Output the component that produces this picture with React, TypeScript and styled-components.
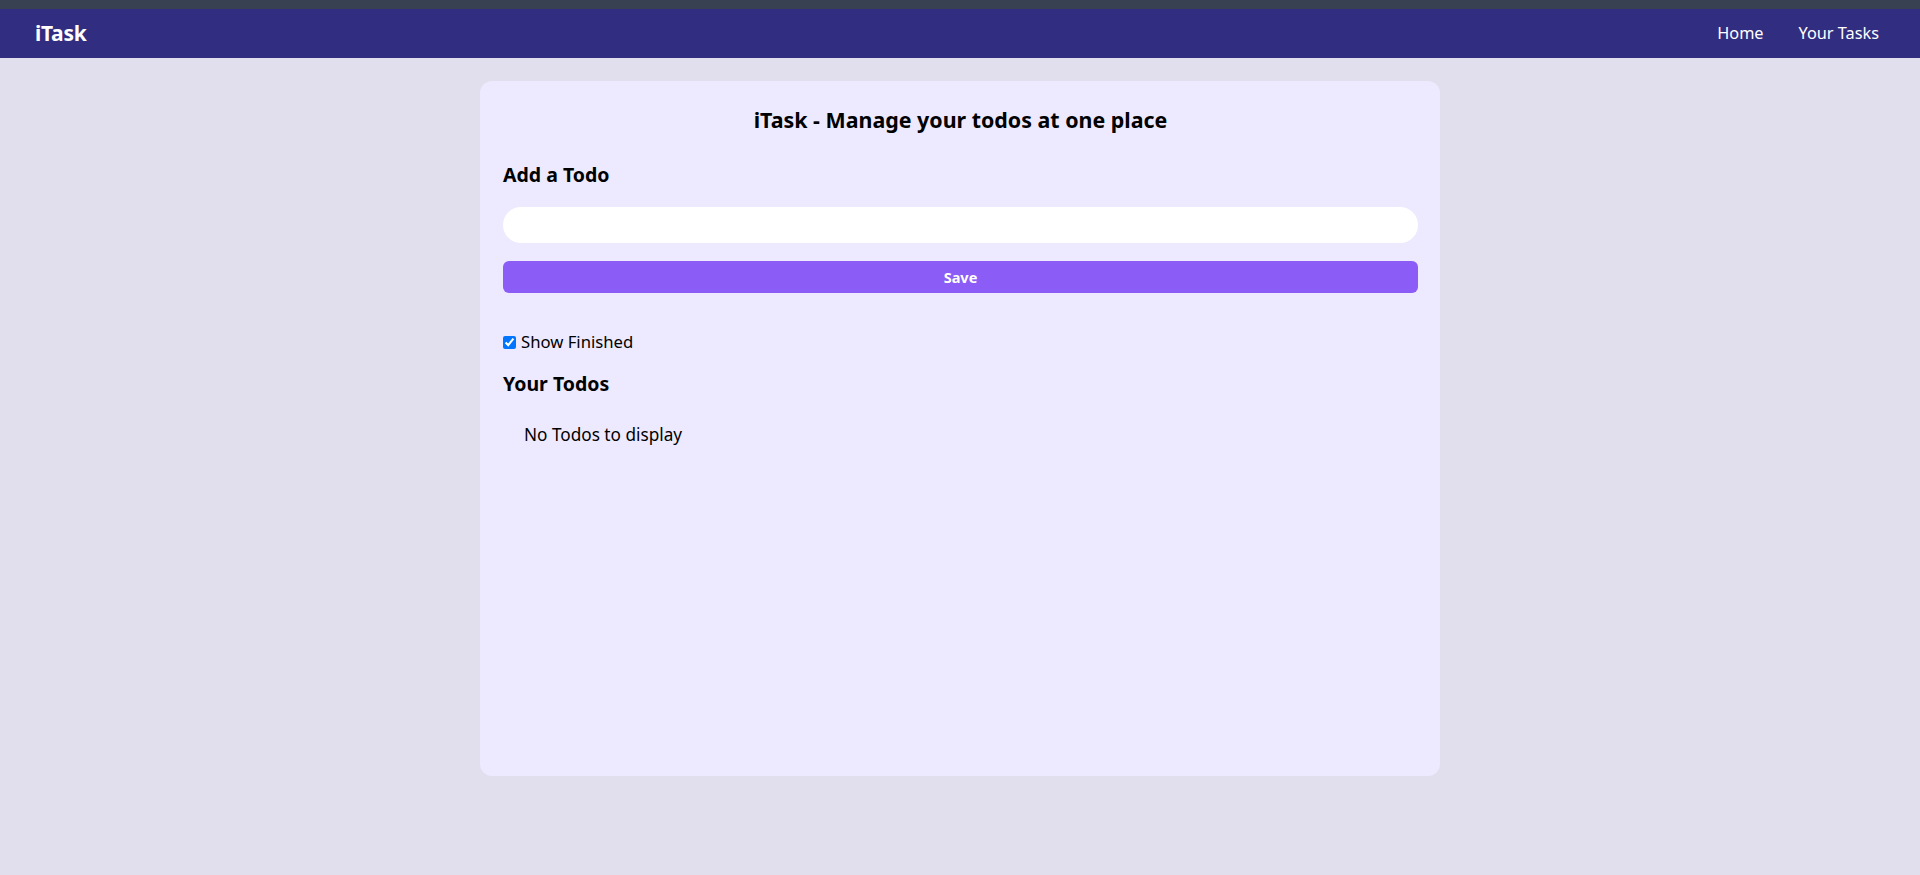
import React, { useState } from "react";
import styled, { createGlobalStyle } from "styled-components";

const GlobalStyle = createGlobalStyle`
  html, body { margin: 0; padding: 0; }
  body {
    background: #e1dfed;
    font-family: "Noto Sans", "Open Sans", sans-serif;
    color: #000;
  }
  * { box-sizing: border-box; }
`;

const Page = styled.div`
  min-height: 875px;
  display: flex;
  flex-direction: column;
`;

const TopStrip = styled.div`
  height: 9px;
  background: #374151;
`;

const Nav = styled.nav`
  height: 49px;
  background: #312e81;
  color: #fff;
  display: flex;
  align-items: center;
  justify-content: space-between;
  padding: 0 41px 1px 35px;
`;

const Logo = styled.span`
  font-weight: 700;
  font-size: 21px;
  letter-spacing: -0.3px;
`;

const NavList = styled.ul`
  list-style: none;
  margin: 0;
  padding: 0;
  display: flex;
  gap: 35px;
  font-size: 16.3px;
`;

const NavItem = styled.li`
  cursor: pointer;
`;

const Card = styled.main`
  width: 960px;
  height: 695px;
  margin: 23px auto 0;
  background: #ede9fe;
  border-radius: 12px;
  padding: 22px 22px 22px 23px;
  display: flex;
  flex-direction: column;
`;

const Title = styled.h1`
  margin: 3px 0 0;
  text-align: center;
  font-size: 21.4px;
  font-weight: 700;
  line-height: 28px;
`;

const SubHeading = styled.h2<{ $top: number }>`
  margin: ${(p) => p.$top}px 0 0;
  font-size: 19.5px;
  font-weight: 700;
  line-height: 28px;
`;

const TodoInput = styled.input`
  margin-top: 18px;
  width: 100%;
  height: 36px;
  border: none;
  border-radius: 999px;
  background: #fff;
  padding: 0 16px;
  outline: none;
  font: inherit;
`;

const SaveButton = styled.button`
  margin-top: 18px;
  width: 100%;
  height: 32px;
  border: none;
  border-radius: 6px;
  background: #8b5cf6;
  color: #fff;
  font-family: inherit;
  font-size: 14.5px;
  font-weight: 700;
  cursor: pointer;
`;

const CheckRow = styled.label`
  margin-top: 37px;
  display: flex;
  align-items: center;
  gap: 5px;
  font-size: 16.7px;
  line-height: 24px;
`;

const Check = styled.input`
  margin: 0;
  width: 13px;
  height: 13px;
`;

const Empty = styled.div`
  margin: 25px 0 0 21px;
  font-size: 17.2px;
  line-height: 24px;
`;

export default function App() {
  const [showFinished, setShowFinished] = useState(true);
  return (
    <>
      <GlobalStyle />
      <Page>
        <TopStrip />
        <Nav>
          <Logo>iTask</Logo>
          <NavList>
            <NavItem>Home</NavItem>
            <NavItem>Your Tasks</NavItem>
          </NavList>
        </Nav>
        <Card>
          <Title>iTask - Manage your todos at one place</Title>
          <SubHeading $top={27}>Add a Todo</SubHeading>
          <TodoInput type="text" />
          <SaveButton>Save</SaveButton>
          <CheckRow>
            <Check
              type="checkbox"
              checked={showFinished}
              onChange={() => setShowFinished(!showFinished)}
            />
            Show Finished
          </CheckRow>
          <SubHeading $top={16}>Your Todos</SubHeading>
          <Empty>No Todos to display</Empty>
        </Card>
      </Page>
    </>
  );
}
